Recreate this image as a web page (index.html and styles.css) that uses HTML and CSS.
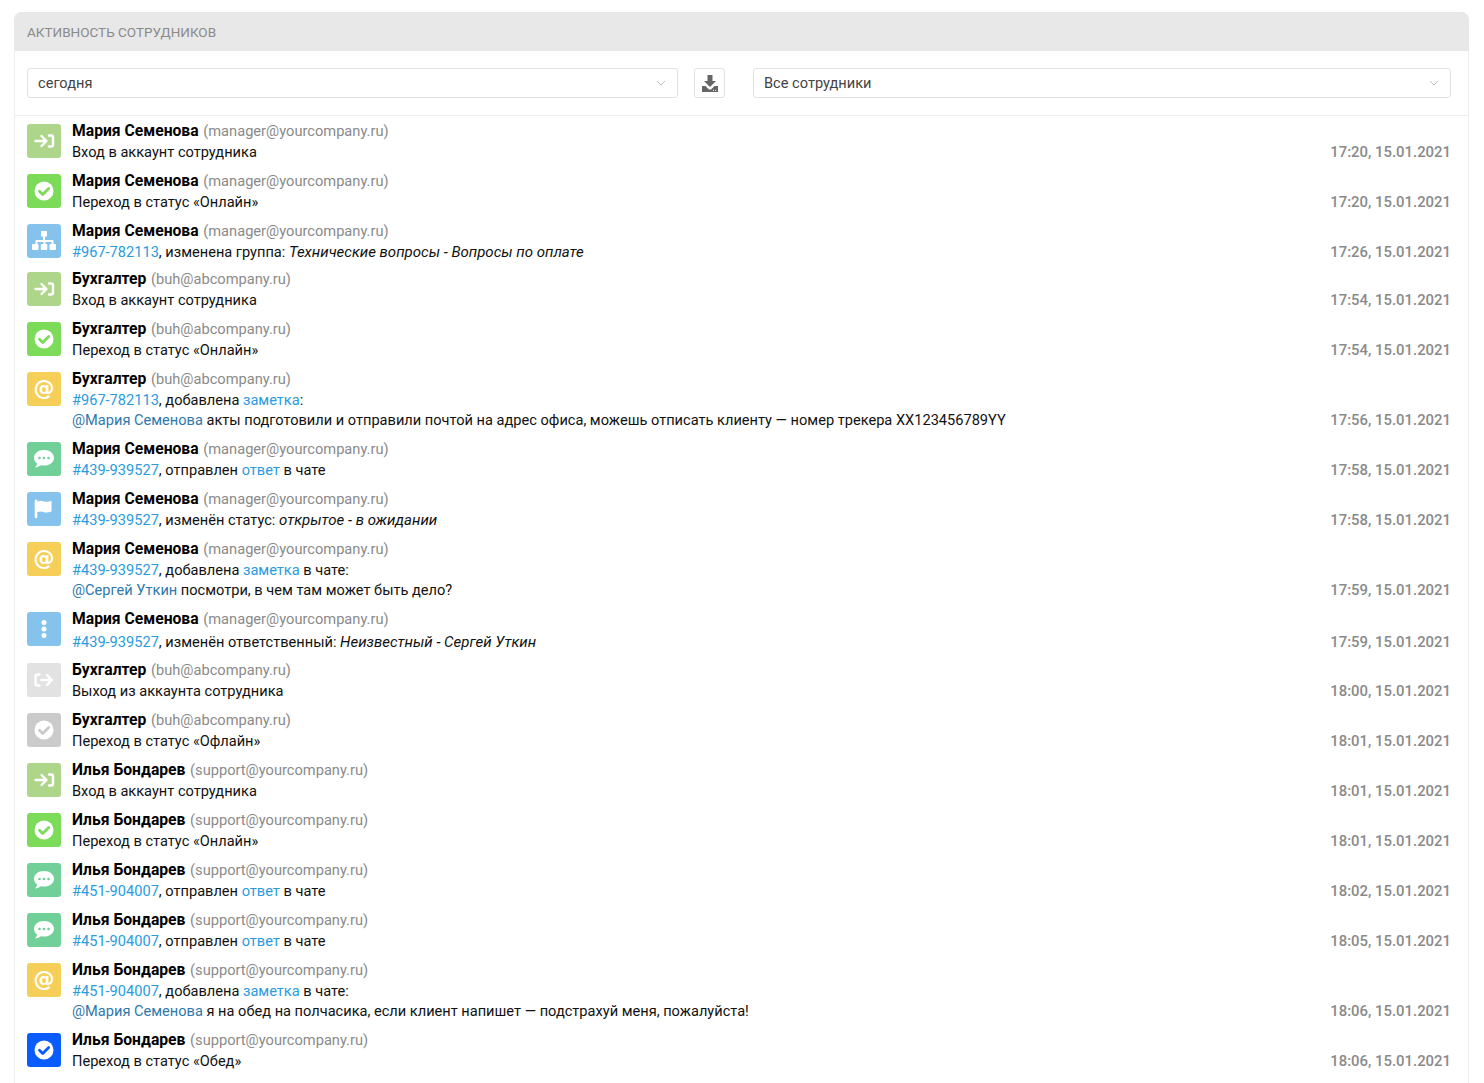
FILE: index.html
```html
<!DOCTYPE html>
<html lang="ru">
<head>
<meta charset="utf-8">
<title>Активность сотрудников</title>
<link rel="stylesheet" href="styles.css">
</head>
<body>
<svg class="defs" width="0" height="0" aria-hidden="true">
  <symbol id="i-in" viewBox="0 0 34 34"><path class="st" d="M8.500 17h10.500M14.500 12l5 5-5 5"/><path class="st" d="M22 11.500h2a2 2 0 0 1 2 2v7a2 2 0 0 1-2 2h-2"/></symbol>
  <symbol id="i-out" viewBox="0 0 34 34"><path class="st" d="M12.500 11.500h-2a2 2 0 0 0-2 2v7a2 2 0 0 0 2 2h2"/><path class="st" d="M14.500 17h10M20 12l5 5-5 5"/></symbol>
  <symbol id="i-check" viewBox="0 0 34 34"><circle cx="17" cy="17" r="9.500" fill="#fff"/><path class="ck" d="M12.500 17.200l3.200 3.200 6-6"/></symbol>
  <symbol id="i-org" viewBox="0 0 34 34"><path fill="#fff" d="M14 7h6v5.500h-2V16h7.500a1 1 0 0 1 1 1v3h-2v-2h-6v2h-2v-2h-6v2h-2v-3a1 1 0 0 1 1-1H16v-3.500h-2z"/><rect x="5" y="20" width="6.500" height="6" rx="1" fill="#fff"/><rect x="13.800" y="20" width="6.500" height="6" rx="1" fill="#fff"/><rect x="22.500" y="20" width="6.500" height="6" rx="1" fill="#fff"/></symbol>
  <symbol id="i-chat" viewBox="0 0 34 34"><path fill="#fff" d="M17 8c5.800 0 10 3.400 10 7.800s-4.200 7.800-10 7.800c-1 0-2-.1-3-.4-1.700 1.300-3.700 2-6 2.300 1-1.100 1.800-2.300 2.200-3.900C8.200 20.200 7 18.100 7 15.800 7 11.400 11.200 8 17 8z"/><circle class="dt" cx="12.500" cy="16" r="1.300"/><circle class="dt" cx="17" cy="16" r="1.300"/><circle class="dt" cx="21.500" cy="16" r="1.300"/></symbol>
  <symbol id="i-flag" viewBox="0 0 34 34"><path fill="#fff" d="M9 7.500a1.300 1.300 0 0 1 1.300 1.300v.7c2-1 4-1 6.200-.3 2.400.8 4.500.8 8-.2v10.500c-3.500 1.300-6 1.300-8.300.5-2-.7-4-.7-5.900.2V25a1.300 1.300 0 0 1-2.600 0V8.800A1.300 1.300 0 0 1 9 7.500z"/></symbol>
  <symbol id="i-more" viewBox="0 0 34 34"><circle cx="17" cy="10.500" r="2.500" fill="#fff"/><circle cx="17" cy="17" r="2.500" fill="#fff"/><circle cx="17" cy="23.500" r="2.500" fill="#fff"/></symbol>
</svg>
<main class="panel">
  <h1 class="panel-title">Активность сотрудников</h1>
  <div class="filters">
    <div class="select"><span>сегодня</span><svg class="chevron" viewBox="0 0 10 6"><path d="M1 1l4 4 4-4"/></svg></div>
    <button class="download" type="button" aria-label="Скачать">
      <svg viewBox="0 0 16 17" width="16" height="17"><path fill="#666" d="M5.500 0h5v6H14l-6 6-6-6h3.500z"/><path fill="#666" d="M0 11h3.500L7 14.500h2l3.500-3.500H16v6H0z"/><circle cx="11.500" cy="15.300" r=".6" fill="#fff"/><circle cx="13.700" cy="15.300" r=".6" fill="#fff"/></svg>
    </button>
    <div class="select select-staff"><span>Все сотрудники</span><svg class="chevron" viewBox="0 0 10 6"><path d="M1 1l4 4 4-4"/></svg></div>
  </div>
  <ul class="feed">
    <li class="row"><span class="icon c-login"><svg><use href="#i-in"/></svg></span><div class="body"><div class="text"><p class="who"><b>Мария Семенова</b> <span class="mail">(manager@yourcompany.ru)</span></p><p>Вход в аккаунт сотрудника</p></div><time>17:20, 15.01.2021</time></div></li>
    <li class="row"><span class="icon c-green"><svg><use href="#i-check"/></svg></span><div class="body"><div class="text"><p class="who"><b>Мария Семенова</b> <span class="mail">(manager@yourcompany.ru)</span></p><p>Переход в статус «Онлайн»</p></div><time>17:20, 15.01.2021</time></div></li>
    <li class="row row-tight"><span class="icon c-blue"><svg><use href="#i-org"/></svg></span><div class="body"><div class="text"><p class="who"><b>Мария Семенова</b> <span class="mail">(manager@yourcompany.ru)</span></p><p><a>#967-782113</a>, изменена группа: <em>Технические вопросы - Вопросы по оплате</em></p></div><time>17:26, 15.01.2021</time></div></li>
    <li class="row"><span class="icon c-login"><svg><use href="#i-in"/></svg></span><div class="body"><div class="text"><p class="who"><b>Бухгалтер</b> <span class="mail">(buh@abcompany.ru)</span></p><p>Вход в аккаунт сотрудника</p></div><time>17:54, 15.01.2021</time></div></li>
    <li class="row"><span class="icon c-green"><svg><use href="#i-check"/></svg></span><div class="body"><div class="text"><p class="who"><b>Бухгалтер</b> <span class="mail">(buh@abcompany.ru)</span></p><p>Переход в статус «Онлайн»</p></div><time>17:54, 15.01.2021</time></div></li>
    <li class="row"><span class="icon icon-at">@</span><div class="body"><div class="text"><p class="who"><b>Бухгалтер</b> <span class="mail">(buh@abcompany.ru)</span></p><p><a>#967-782113</a>, добавлена <a>заметка</a>:</p><p><a class="mention">@Мария Семенова</a> акты подготовили и отправили почтой на адрес офиса, можешь отписать клиенту — номер трекера XX123456789YY</p></div><time>17:56, 15.01.2021</time></div></li>
    <li class="row"><span class="icon c-chat"><svg><use href="#i-chat"/></svg></span><div class="body"><div class="text"><p class="who"><b>Мария Семенова</b> <span class="mail">(manager@yourcompany.ru)</span></p><p><a>#439-939527</a>, отправлен <a>ответ</a> в чате</p></div><time>17:58, 15.01.2021</time></div></li>
    <li class="row"><span class="icon c-blue"><svg><use href="#i-flag"/></svg></span><div class="body"><div class="text"><p class="who"><b>Мария Семенова</b> <span class="mail">(manager@yourcompany.ru)</span></p><p><a>#439-939527</a>, изменён статус: <em>открытое - в ожидании</em></p></div><time>17:58, 15.01.2021</time></div></li>
    <li class="row"><span class="icon icon-at">@</span><div class="body"><div class="text"><p class="who"><b>Мария Семенова</b> <span class="mail">(manager@yourcompany.ru)</span></p><p><a>#439-939527</a>, добавлена <a>заметка</a> в чате:</p><p><a class="mention">@Сергей Уткин</a> посмотри, в чем там может быть дело?</p></div><time>17:59, 15.01.2021</time></div></li>
    <li class="row row-loose"><span class="icon c-blue"><svg><use href="#i-more"/></svg></span><div class="body"><div class="text"><p class="who"><b>Мария Семенова</b> <span class="mail">(manager@yourcompany.ru)</span></p><p><a>#439-939527</a>, изменён ответственный: <em>Неизвестный - Сергей Уткин</em></p></div><time>17:59, 15.01.2021</time></div></li>
    <li class="row"><span class="icon c-light"><svg><use href="#i-out"/></svg></span><div class="body"><div class="text"><p class="who"><b>Бухгалтер</b> <span class="mail">(buh@abcompany.ru)</span></p><p>Выход из аккаунта сотрудника</p></div><time>18:00, 15.01.2021</time></div></li>
    <li class="row"><span class="icon c-gray"><svg><use href="#i-check"/></svg></span><div class="body"><div class="text"><p class="who"><b>Бухгалтер</b> <span class="mail">(buh@abcompany.ru)</span></p><p>Переход в статус «Офлайн»</p></div><time>18:01, 15.01.2021</time></div></li>
    <li class="row"><span class="icon c-login"><svg><use href="#i-in"/></svg></span><div class="body"><div class="text"><p class="who"><b>Илья Бондарев</b> <span class="mail">(support@yourcompany.ru)</span></p><p>Вход в аккаунт сотрудника</p></div><time>18:01, 15.01.2021</time></div></li>
    <li class="row"><span class="icon c-green"><svg><use href="#i-check"/></svg></span><div class="body"><div class="text"><p class="who"><b>Илья Бондарев</b> <span class="mail">(support@yourcompany.ru)</span></p><p>Переход в статус «Онлайн»</p></div><time>18:01, 15.01.2021</time></div></li>
    <li class="row"><span class="icon c-chat"><svg><use href="#i-chat"/></svg></span><div class="body"><div class="text"><p class="who"><b>Илья Бондарев</b> <span class="mail">(support@yourcompany.ru)</span></p><p><a>#451-904007</a>, отправлен <a>ответ</a> в чате</p></div><time>18:02, 15.01.2021</time></div></li>
    <li class="row"><span class="icon c-chat"><svg><use href="#i-chat"/></svg></span><div class="body"><div class="text"><p class="who"><b>Илья Бондарев</b> <span class="mail">(support@yourcompany.ru)</span></p><p><a>#451-904007</a>, отправлен <a>ответ</a> в чате</p></div><time>18:05, 15.01.2021</time></div></li>
    <li class="row"><span class="icon icon-at">@</span><div class="body"><div class="text"><p class="who"><b>Илья Бондарев</b> <span class="mail">(support@yourcompany.ru)</span></p><p><a>#451-904007</a>, добавлена <a>заметка</a> в чате:</p><p><a class="mention">@Мария Семенова</a> я на обед на полчасика, если клиент напишет — подстрахуй меня, пожалуйста!</p></div><time>18:06, 15.01.2021</time></div></li>
    <li class="row"><span class="icon c-lunch"><svg><use href="#i-check"/></svg></span><div class="body"><div class="text"><p class="who"><b>Илья Бондарев</b> <span class="mail">(support@yourcompany.ru)</span></p><p>Переход в статус «Обед»</p></div><time>18:06, 15.01.2021</time></div></li>
  </ul>
</main>
</body>
</html>
```
FILE: styles.css
```css
* { box-sizing: border-box; }
html, body { height: 100%; overflow: hidden; }
body {
  margin: 0;
  padding: 12px 15px 0 14px;
  background: #fff;
  color: #111;
  font: 14.6px/20px Roboto, "Noto Sans", sans-serif;
}
.defs { position: absolute; }
.panel {
  min-height: 1071px;
  border: 1px solid #eee;
  border-bottom: 0;
  border-radius: 8px 8px 0 0;
}
.panel-title {
  margin: -1px -1px 0;
  height: 39px;
  padding: 1px 13px 0;
  background: #e8e8e8;
  border-radius: 8px 8px 0 0;
  color: #8a8a8a;
  font-size: 13.500px;
  font-weight: 400;
  line-height: 38px;
  text-transform: uppercase;
}
.filters {
  display: grid;
  grid-template-columns: 651px 31px 698px;
  column-gap: 16px;
  padding: 17px 17px 17px 12px;
  border-bottom: 1px solid #eee;
}
.select {
  display: flex;
  align-items: center;
  justify-content: space-between;
  height: 30px;
  padding: 0 11px 0 10px;
  border: 1px solid #e2e2e2;
  border-radius: 3px;
  color: #444;
  font-size: 14.6px;
}
.select-staff { margin-left: 12px; width: 698px; }
.chevron { width: 10px; height: 6px; fill: none; stroke: #bdbdbd; stroke-width: 1; }
.download {
  display: flex;
  align-items: center;
  justify-content: center;
  width: 31px;
  height: 30px;
  padding: 0;
  background: #fff;
  border: 1px solid #e2e2e2;
  border-radius: 3px;
}
.feed { list-style: none; margin: 0; padding: 5px 17px 0 12px; }
.row { display: flex; column-gap: 11px; align-items: flex-start; padding-bottom: 9px; }
.row-tight { padding-bottom: 7px; }
.row-loose { padding-bottom: 8px; }
.row-loose .who { margin-bottom: 2px; }
.icon {
  flex: none;
  width: 34px;
  height: 34px;
  margin-top: 3px;
  border-radius: 3px;
}
.icon svg { display: block; width: 34px; height: 34px; }
.icon-at {
  background: #f6cf58;
  color: #fff;
  font: 700 21px/32px "DejaVu Sans", sans-serif;
  text-align: center;
}
.c-login { background: #aed68b; color: #aed68b; }
.c-green { background: #7cdb59; color: #7cdb59; }
.c-blue { background: #85c3ec; color: #85c3ec; }
.c-chat { background: #71d098; color: #71d098; }
.c-light { background: #e2e2e2; color: #e2e2e2; }
.c-gray { background: #cbcbcb; color: #cbcbcb; }
.c-lunch { background: #0b5cff; color: #0b5cff; }
.st { fill: none; stroke: #fff; stroke-width: 2.400; stroke-linecap: round; stroke-linejoin: round; }
.ck { fill: none; stroke: currentColor; stroke-width: 2.800; stroke-linecap: round; stroke-linejoin: round; }
.dt { fill: currentColor; }
.body { flex: 1; min-width: 0; display: flex; align-items: flex-end; justify-content: space-between; }
.text p { margin: 0; }
.who { line-height: 21px; color: #111; }
.who b { font-size: 15.700px; font-weight: 700; color: #000; line-height: 1; }
.mail { margin-left: 1px; color: #8a8a8a; font-size: 14.65px; line-height: 1; }
a { color: #2a9be0; }
a.mention { color: #2f78ac; }
em { font-style: italic; font-size: 15px; line-height: 1; }
time { flex: none; color: #8a8a8a; font-weight: 500; font-size: 14.9px; line-height: 20px; }
```
